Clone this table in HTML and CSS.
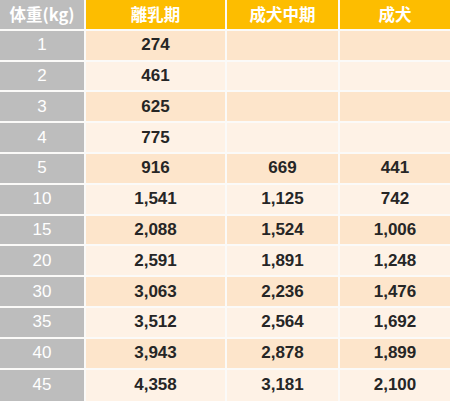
FILE: index.html
```html
<!DOCTYPE html>
<html lang="ja">
<head>
<meta charset="utf-8">
<link rel="stylesheet" href="styles.css">
</head>
<body>
<div class="table">
  <div class="hd key">体重(kg)</div><div class="hd">離乳期</div><div class="hd">成犬中期</div><div class="hd">成犬</div>

  <div class="key">1</div><div class="c odd">274</div><div class="c odd"></div><div class="c odd"></div>
  <div class="key">2</div><div class="c even">461</div><div class="c even"></div><div class="c even"></div>
  <div class="key">3</div><div class="c odd">625</div><div class="c odd"></div><div class="c odd"></div>
  <div class="key">4</div><div class="c even">775</div><div class="c even"></div><div class="c even"></div>
  <div class="key">5</div><div class="c odd">916</div><div class="c odd">669</div><div class="c odd">441</div>
  <div class="key">10</div><div class="c even">1,541</div><div class="c even">1,125</div><div class="c even">742</div>
  <div class="key">15</div><div class="c odd">2,088</div><div class="c odd">1,524</div><div class="c odd">1,006</div>
  <div class="key">20</div><div class="c even">2,591</div><div class="c even">1,891</div><div class="c even">1,248</div>
  <div class="key">30</div><div class="c odd">3,063</div><div class="c odd">2,236</div><div class="c odd">1,476</div>
  <div class="key">35</div><div class="c even">3,512</div><div class="c even">2,564</div><div class="c even">1,692</div>
  <div class="key">40</div><div class="c odd">3,943</div><div class="c odd">2,878</div><div class="c odd">1,899</div>
  <div class="key">45</div><div class="c even">4,358</div><div class="c even">3,181</div><div class="c even">2,100</div>
</div>
</body>
</html>
```
FILE: styles.css
```css
html, body {
  margin: 0;
  padding: 0;
  background: #ffffff;
}
.table {
  width: 450px;
  height: 401px;
  display: grid;
  grid-template-columns: 84px 139px 111px 110px;
  grid-template-rows: repeat(12, 28.8px) 1fr;
  column-gap: 2px;
  row-gap: 2px;
  background: #fbfaf8;
  font-family: "Liberation Sans", "Noto Sans CJK JP", sans-serif;
  font-size: 17px;
  overflow: hidden;
}
.table > div {
  display: flex;
  align-items: center;
  justify-content: center;
}
.hd {
  background: #fdbd00;
  color: #ffffff;
  font-family: "Noto Sans CJK JP", sans-serif;
  font-weight: 700;
  font-size: 16.5px;
}
.key {
  background: #bdbdbd;
  color: #ffffff;
}
.hd.key {
  background: #bdbdbd;
}
.c {
  color: #262626;
  font-weight: 700;
}
.odd {
  background: #fde5cb;
}
.even {
  background: #fef2e6;
}
```
